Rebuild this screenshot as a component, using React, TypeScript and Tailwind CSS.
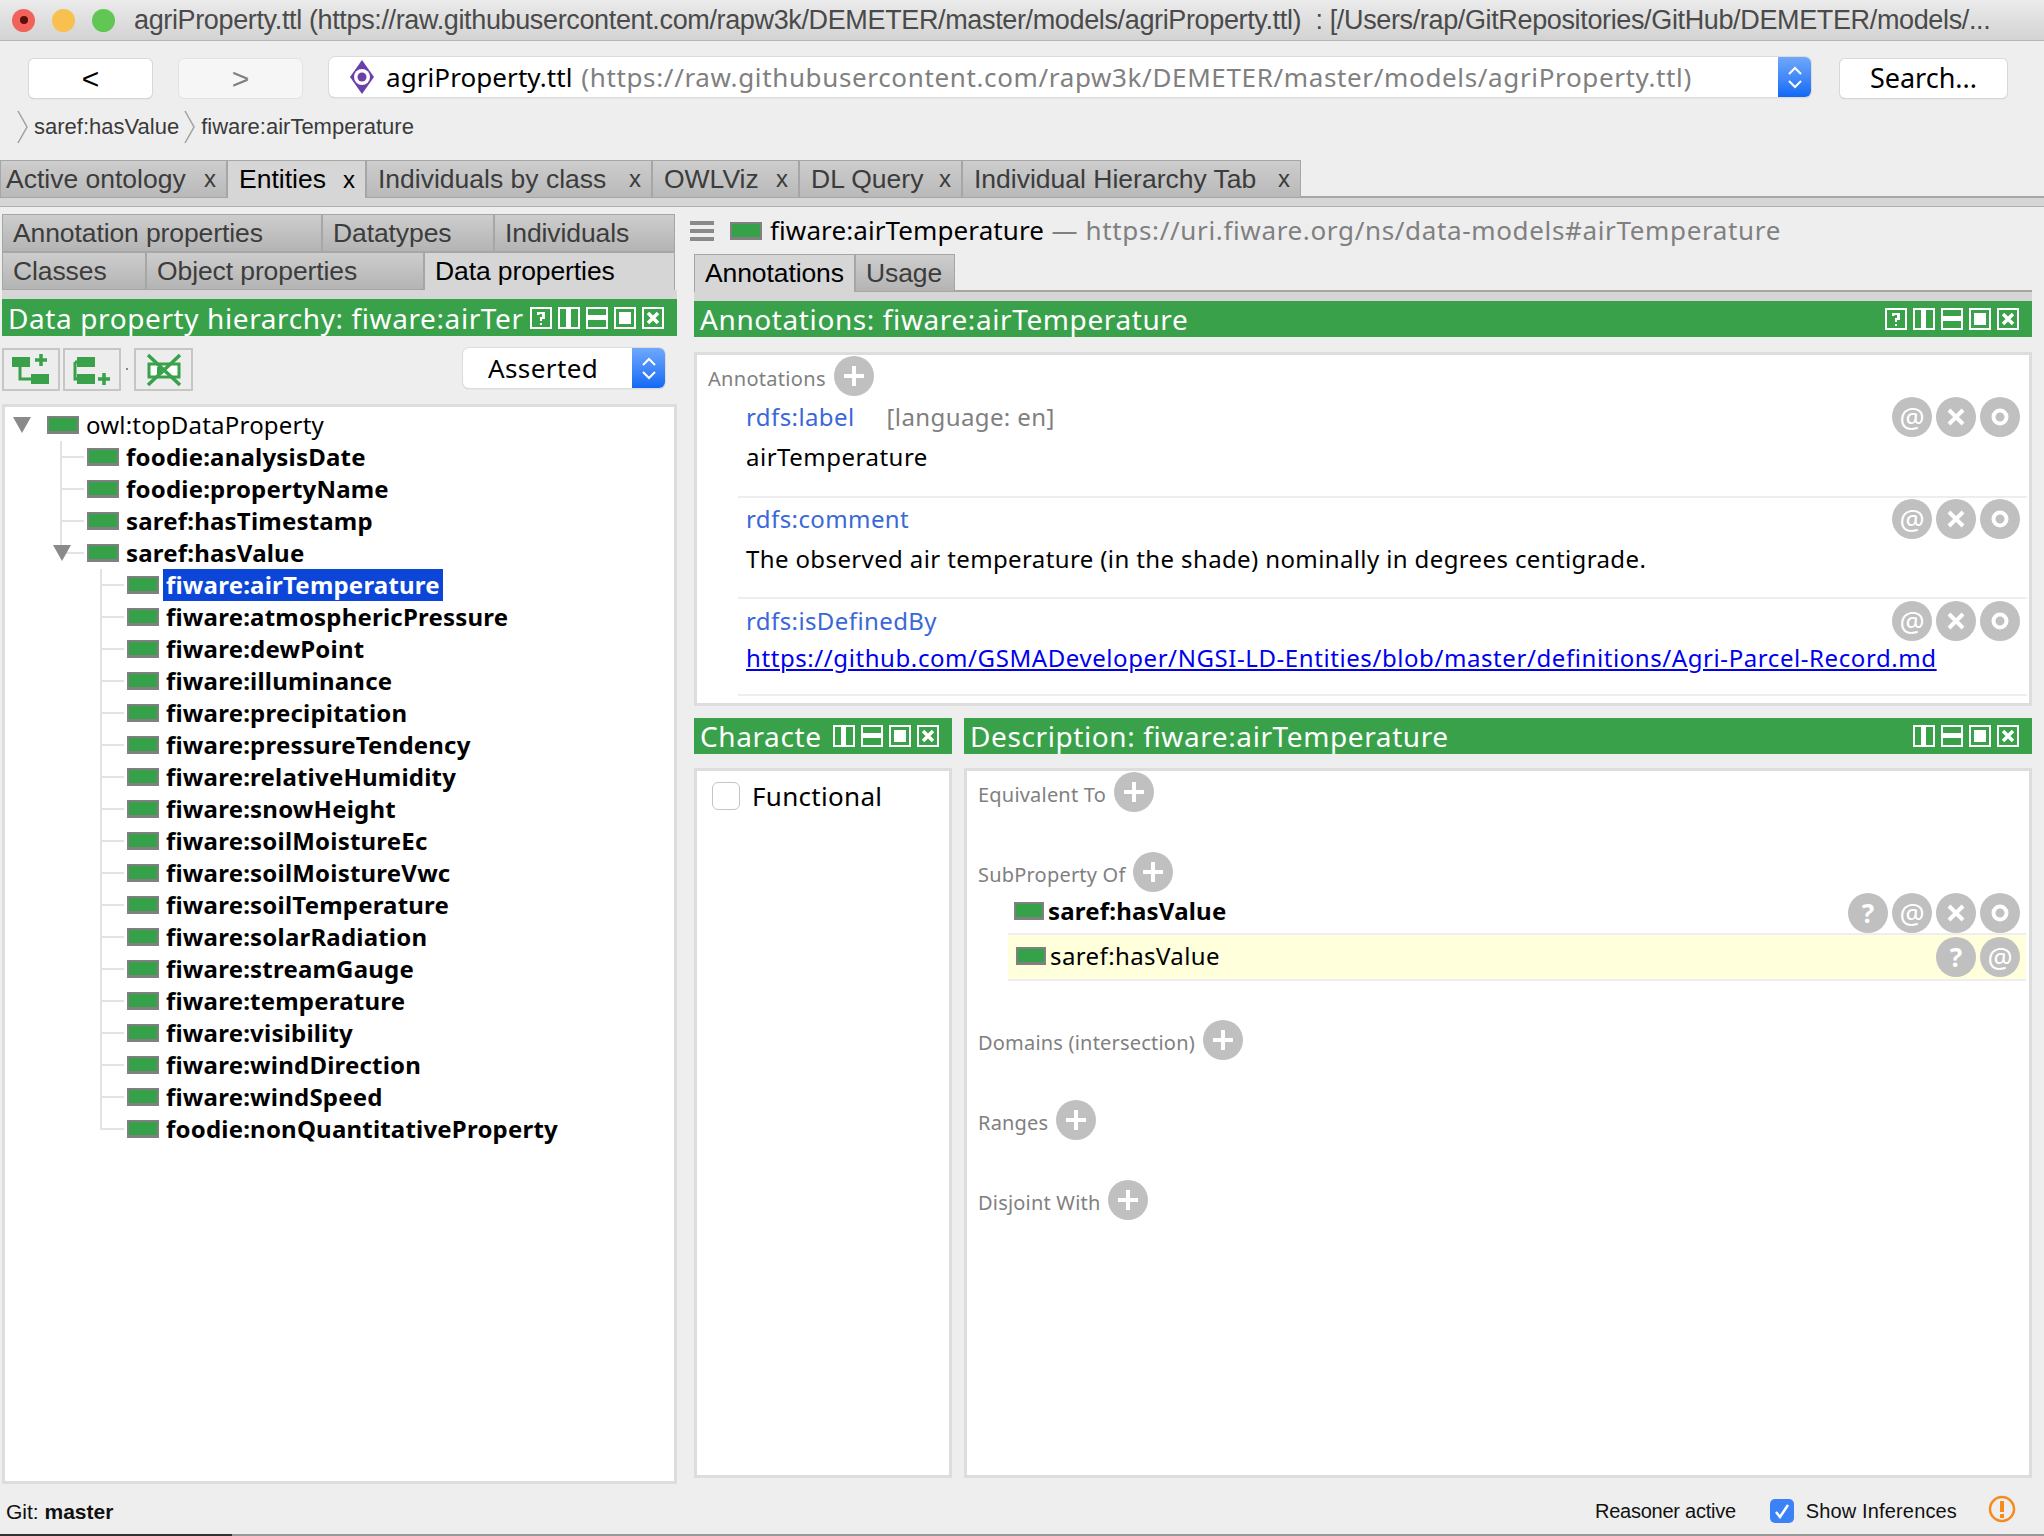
import { ReactNode } from 'react';

const lucida = 'font-["Noto_Sans",sans-serif]';
const helvetica = 'font-["Liberation_Sans",sans-serif]';

const DataIcon = ({ className = 'w-8' }: { className?: string }) => (
  <span className={`block h-[18px] shrink-0 border-2 border-b-[3px] border-[#808080] bg-[#35a24a] ${className}`} />
);

const Triangle = () => (
  <svg width="18" height="16" viewBox="0 0 18 16" className="block">
    <path d="M0 0 H18 L9 16 Z" fill="#8a8a8a" />
  </svg>
);

const Stepper = ({ className }: { className: string }) => (
  <span className={`flex flex-col items-center justify-center gap-[3px] rounded-r-[6px] bg-gradient-to-b from-[#6ea8fb] to-[#0f68f6] ${className}`}>
    <svg width="16" height="10" viewBox="0 0 16 10"><path d="M2 8 L8 2 L14 8" fill="none" stroke="#fff" strokeWidth="2" /></svg>
    <svg width="16" height="10" viewBox="0 0 16 10"><path d="M2 2 L8 8 L14 2" fill="none" stroke="#fff" strokeWidth="2" /></svg>
  </span>
);

type ViewIcon = 'help' | 'vsplit' | 'hsplit' | 'max' | 'close';

const ViewButton = ({ kind }: { kind: ViewIcon }) => (
  <svg width="22" height="22" viewBox="0 0 22 22" className="block shrink-0">
    <rect x="1" y="1" width="20" height="20" fill="none" stroke="#fff" strokeWidth="2" />
    {kind === 'help' && <path d="M7 8 V5 H15 V12 H12 V14 H10 V10 H12 V7 H9.5 V8 Z M10 16 H12 V18 H10 Z" fill="#fff" />}
    {kind === 'vsplit' && <rect x="8" y="1" width="5" height="20" fill="#fff" />}
    {kind === 'hsplit' && <rect x="1" y="8" width="20" height="5" fill="#fff" />}
    {kind === 'max' && <rect x="5" y="5" width="12" height="12" fill="#fff" />}
    {kind === 'close' && <path d="M6 6 L16 16 M16 6 L6 16" stroke="#fff" strokeWidth="3.5" />}
  </svg>
);

const ViewHeader = ({ title, icons, className }: { title: string; icons: ViewIcon[]; className: string }) => (
  <div className={`flex h-9 items-center justify-between bg-[#3aa14b] pl-[6px] pr-[13px] ${className}`}>
    <span className={`${lucida} whitespace-nowrap text-[28px] leading-none tracking-[0.6px] text-white`}>{title}</span>
    <span className="flex gap-[6px]">
      {icons.map((icon) => (
        <ViewButton key={icon} kind={icon} />
      ))}
    </span>
  </div>
);

const Circle = ({ children, className = '' }: { children: ReactNode; className?: string }) => (
  <span className={`flex h-10 w-10 shrink-0 items-center justify-center rounded-full bg-[#c0c0c0] font-bold text-white ${lucida} ${className}`}>
    {children}
  </span>
);

const PlusCircle = ({ className = '' }: { className?: string }) => (
  <Circle className={className}>
    <svg width="24" height="24" viewBox="0 0 24 24"><path d="M12 2 V22 M2 12 H22" stroke="#fff" strokeWidth="4" /></svg>
  </Circle>
);

const AtCircle = () => <Circle className="text-[28px] font-normal leading-none">@</Circle>;
const HelpCircle = () => <Circle className="text-[26px] leading-none">?</Circle>;
const CrossCircle = () => (
  <Circle>
    <svg width="20" height="20" viewBox="0 0 20 20"><path d="M3 3 L17 17 M17 3 L3 17" stroke="#fff" strokeWidth="4" /></svg>
  </Circle>
);
const RingCircle = () => (
  <Circle>
    <svg width="18" height="18" viewBox="0 0 18 18"><circle cx="9" cy="9" r="6.5" fill="none" stroke="#fff" strokeWidth="4" /></svg>
  </Circle>
);

const Tab = ({ label, active, first, width }: { label: string; active?: boolean; first?: boolean; width: string }) => (
  <div
    className={`flex h-[38px] items-center border border-[#a6a6a6] text-[26.5px] leading-none ${helvetica} ${width} ${first ? 'pl-[5px]' : 'pl-[11px]'} ${
      active ? 'border-b-0 bg-[#d6d6d6] text-black' : 'bg-gradient-to-b from-[#cdcdcd] to-[#b9b9b9] text-[#3c3c3c]'
    }`}
  >
    <span className="whitespace-nowrap">{label}</span>
    <span className="ml-auto mr-[10px] text-[24px]">x</span>
  </div>
);

const SubTab = ({ label, active, width }: { label: string; active?: boolean; width: string }) => (
  <div
    className={`flex h-[38px] items-center border border-[#a6a6a6] pl-[10px] text-[26.5px] leading-none tracking-[-0.1px] ${helvetica} ${width} ${
      active ? 'border-b-0 bg-[#d6d6d6] text-black' : 'bg-gradient-to-b from-[#cdcdcd] to-[#b4b4b4] text-[#3c3c3c]'
    }`}
  >
    <span className="whitespace-nowrap">{label}</span>
  </div>
);

const children = [
  'fiware:airTemperature',
  'fiware:atmosphericPressure',
  'fiware:dewPoint',
  'fiware:illuminance',
  'fiware:precipitation',
  'fiware:pressureTendency',
  'fiware:relativeHumidity',
  'fiware:snowHeight',
  'fiware:soilMoistureEc',
  'fiware:soilMoistureVwc',
  'fiware:soilTemperature',
  'fiware:solarRadiation',
  'fiware:streamGauge',
  'fiware:temperature',
  'fiware:visibility',
  'fiware:windDirection',
  'fiware:windSpeed',
  'foodie:nonQuantitativeProperty',
];

const TreeRow = ({
  label,
  depth,
  bold = true,
  open,
  last,
  selected,
}: {
  label: string;
  depth: number;
  bold?: boolean;
  open?: boolean;
  last?: boolean;
  selected?: boolean;
}) => {
  const iconLeft = depth === 0 ? 'ml-[42px]' : depth === 1 ? 'ml-[82px]' : 'ml-[122px]';
  return (
    <div className="relative flex h-8 items-center">
      {depth > 0 && (
        <>
          <span className={`absolute top-0 w-[2px] bg-[#e3e3e3] ${depth === 1 ? 'left-[55px]' : 'left-[95px]'} ${last ? 'h-4' : 'h-8'}`} />
          <span className={`absolute top-[15px] h-[2px] w-6 bg-[#e3e3e3] ${depth === 1 ? 'left-[55px]' : 'left-[95px]'}`} />
        </>
      )}
      {open && (
        <span className={`absolute top-[8px] ${depth === 0 ? 'left-[8px]' : 'left-[48px]'}`}>
          <Triangle />
        </span>
      )}
      <DataIcon className={`relative w-8 ${iconLeft}`} />
      <span
        className={`ml-[4px] whitespace-nowrap px-[3px] text-[24px] leading-8 tracking-[0.2px] ${lucida} ${bold ? 'font-bold' : ''} ${
          selected ? 'bg-[#0b46d8] text-white' : 'text-black'
        }`}
      >
        {label}
      </span>
    </div>
  );
};

const AnnotationItem = ({
  name,
  extra,
  value,
  height,
  rowClass,
  valueClass,
}: {
  name: string;
  extra?: string;
  value: ReactNode;
  height: string;
  rowClass: string;
  valueClass: string;
}) => (
  <div className={`ml-[41px] mr-[2px] border-b-2 border-[#eeeeee] ${height}`}>
    <div className={`flex h-[38px] items-center justify-between pr-[7px] ${rowClass}`}>
      <span className={`pl-2 text-[24px] leading-none tracking-[0.4px] text-[#3a68d8] ${lucida}`}>
        {name}
        {extra && <span className="ml-8 text-[#808080]">{extra}</span>}
      </span>
      <span className="flex gap-1">
        <AtCircle />
        <CrossCircle />
        <RingCircle />
      </span>
    </div>
    <div className={`pl-2 text-[24px] leading-8 ${lucida} ${valueClass}`}>{value}</div>
  </div>
);

const SectionHeader = ({ label, height = 'h-[80px]' }: { label: string; height?: string }) => (
  <div className={`pl-[11px] ${height}`}>
    <div className="flex h-[46px] items-center gap-2">
      <span className={`text-[20px] leading-none tracking-[0.2px] text-[#808080] ${lucida}`}>{label}</span>
      <PlusCircle className="-mt-[6px]" />
    </div>
  </div>
);

export default function App() {
  return (
    <div className={`relative flex h-[1536px] w-[2044px] flex-col overflow-hidden bg-[#eeeeee] ${helvetica}`}>
      {/* title bar */}
      <div className="flex h-[41px] shrink-0 items-center border-b border-[#b5b5b5] bg-gradient-to-b from-[#ebebeb] to-[#d3d3d3] pl-[12px]">
        <span className="flex h-[23px] w-[23px] items-center justify-center rounded-full bg-[#f0625a]">
          <span className="h-2 w-2 rounded-full bg-[#5a0f0a]" />
        </span>
        <span className="ml-[17px] h-[23px] w-[23px] rounded-full bg-[#f8c04e]" />
        <span className="ml-[17px] h-[23px] w-[23px] rounded-full bg-[#62c655]" />
        <span className="ml-[19px] whitespace-nowrap text-[27px] leading-none tracking-[-0.36px] text-[#4a4a4a]">
          agriProperty.ttl (https://raw.githubusercontent.com/rapw3k/DEMETER/master/models/agriProperty.ttl)&nbsp; : [/Users/rap/GitRepositories/GitHub/DEMETER/models/...
        </span>
      </div>

      {/* navigation bar */}
      <div className="flex h-[58px] shrink-0 items-start pl-[29px] pt-[16px]">
        <button className={`mt-[2px] flex h-[39px] w-[123px] items-center justify-center rounded-[5px] bg-white text-[30px] leading-none shadow-[0_0_0_1px_#d8d8d8,0_1px_1px_#aaa] ${helvetica}`}>&lt;</button>
        <button className={`ml-[27px] mt-[2px] flex h-[39px] w-[123px] items-center justify-center rounded-[5px] bg-[#f6f6f6] text-[30px] leading-none text-[#808080] shadow-[0_0_0_1px_#e2e2e2] ${helvetica}`}>&gt;</button>
        <div className="ml-[27px] flex h-[40px] w-[1482px] items-center rounded-[6px] bg-white shadow-[0_0_0_1px_#dcdcdc,0_1px_1px_#aaa]">
          <svg width="28" height="36" viewBox="0 0 28 36" className="ml-[19px] shrink-0">
            <path d="M14 1 L26 18 L14 35 L2 18 Z" fill="#6b3fa8" />
            <circle cx="14" cy="18" r="8" fill="#fff" />
            <circle cx="14" cy="18" r="4.5" fill="#6b3fa8" />
          </svg>
          <span className={`ml-[10px] whitespace-nowrap text-[26px] leading-none tracking-[0.08px] ${lucida}`}>
            agriProperty.ttl <span className="ml-[2px] tracking-[0.64px] text-[#808080]">(https://raw.githubusercontent.com/rapw3k/DEMETER/master/models/agriProperty.ttl)</span>
          </span>
          <Stepper className="ml-auto h-[40px] w-[33px]" />
        </div>
        <button className={`ml-[29px] mt-[2px] flex h-[39px] w-[167px] items-center justify-center rounded-[5px] bg-white pb-[3px] text-[27px] leading-none shadow-[0_0_0_1px_#d8d8d8,0_1px_1px_#aaa] ${lucida}`}>Search...</button>
      </div>

      {/* breadcrumb */}
      <div className="flex h-[61px] shrink-0 items-start pl-[17px] pt-[11px] text-[22px] leading-[34px] text-[#3a3a3a]">
        <svg width="12" height="34" viewBox="0 0 12 34" className="mr-[5px]"><path d="M1 1 L10 17 L1 33" fill="none" stroke="#a0a0a0" strokeWidth="1.5" /></svg>
        <span>saref:hasValue</span>
        <svg width="12" height="34" viewBox="0 0 12 34" className="mx-[5px]"><path d="M1 1 L10 17 L1 33" fill="none" stroke="#a0a0a0" strokeWidth="1.5" /></svg>
        <span>fiware:airTemperature</span>
      </div>

      {/* workspace tabs */}
      <div className="flex h-[38px] shrink-0 border-b-2 border-[#a6a6a6]">
        <Tab label="Active ontology" first width="w-[227px]" />
        <Tab label="Entities" active width="w-[139px]" />
        <Tab label="Individuals by class" width="w-[286px]" />
        <Tab label="OWLViz" width="w-[147px]" />
        <Tab label="DL Query" width="w-[163px]" />
        <Tab label="Individual Hierarchy Tab" width="w-[339px]" />
      </div>
      <div className="h-[9px] shrink-0 border-b border-[#b0b0b0] bg-[#d6d6d6]" />

      {/* main split */}
      <div className="flex h-[1277px] shrink-0 gap-[17px] pl-[2px]">
        {/* left column */}
        <div className="flex w-[675px] flex-col pt-[7px]">
          <div className="flex">
            <SubTab label="Annotation properties" width="w-[320px]" />
            <SubTab label="Datatypes" width="w-[172px]" />
            <SubTab label="Individuals" width="w-[181px]" />
          </div>
          <div className="flex">
            <SubTab label="Classes" width="w-[144px]" />
            <SubTab label="Object properties" width="w-[278px]" />
            <SubTab label="Data properties" active width="w-[251px]" />
          </div>
          <div className="h-[9px] bg-[#d6d6d6]" />
          <ViewHeader title="Data property hierarchy: fiware:airTer" icons={['help', 'vsplit', 'hsplit', 'max', 'close']} className="h-[37px]" />
          <div className="flex h-[68px] items-start pt-[12px]">
            <div className="flex h-[43px] w-[58px] items-center justify-center border-2 border-[#c6c6c6] bg-[#ededed]">
              <svg width="40" height="32" viewBox="0 0 40 32">
                <rect x="1" y="3" width="18" height="10" fill="#3aa14b" />
                <rect x="20" y="20" width="18" height="10" fill="#3aa14b" />
                <path d="M9 13 V25 H20" fill="none" stroke="#3aa14b" strokeWidth="3" />
                <path d="M30 0 V12 M24 6 H36" stroke="#3aa14b" strokeWidth="3.5" />
              </svg>
            </div>
            <div className="ml-[3px] flex h-[43px] w-[58px] items-center justify-center border-2 border-[#c6c6c6] bg-[#ededed]">
              <svg width="40" height="32" viewBox="0 0 40 32">
                <rect x="5" y="3" width="18" height="10" fill="#3aa14b" />
                <rect x="5" y="20" width="18" height="10" fill="#3aa14b" />
                <path d="M3 8 H5 M3 8 V25 H5" fill="none" stroke="#3aa14b" strokeWidth="3" />
                <path d="M32 19 V31 M26 25 H38" stroke="#3aa14b" strokeWidth="3.5" />
              </svg>
            </div>
            <span className="ml-[5px] mt-[20px] h-[2px] w-[2px] bg-[#888]" />
            <div className="ml-[6px] flex h-[43px] w-[59px] items-center justify-center border-2 border-[#c6c6c6] bg-[#ededed]">
              <svg width="36" height="34" viewBox="0 0 36 34">
                <rect x="3" y="11" width="30" height="13" fill="#fff" stroke="#3aa14b" strokeWidth="3" />
                <rect x="11" y="14" width="6" height="7" fill="#3aa14b" />
                <path d="M2 2 L34 32 M34 2 L2 32" stroke="#3aa14b" strokeWidth="3.5" />
              </svg>
            </div>
            <div className="ml-auto mr-[12px] flex h-[40px] w-[202px] items-center rounded-[6px] bg-white shadow-[0_0_0_1px_#dcdcdc,0_1px_1px_#aaa]">
              <span className={`ml-[25px] text-[26px] leading-none tracking-[0.4px] ${lucida}`}>Asserted</span>
              <Stepper className="ml-auto h-[40px] w-[33px]" />
            </div>
          </div>
          <div className="h-[1080px] border-[3px] border-[#dddddd] bg-white pt-[2px]">
            <TreeRow label="owl:topDataProperty" depth={0} bold={false} open />
            <TreeRow label="foodie:analysisDate" depth={1} />
            <TreeRow label="foodie:propertyName" depth={1} />
            <TreeRow label="saref:hasTimestamp" depth={1} />
            <TreeRow label="saref:hasValue" depth={1} open last />
            {children.map((name, index) => (
              <TreeRow key={name} label={name} depth={2} selected={index === 0} last={index === children.length - 1} />
            ))}
          </div>
        </div>

        {/* right column */}
        <div className="flex w-[1338px] flex-col">
          <div className="flex h-[47px] items-center">
            <span className="-ml-[4px] flex w-6 flex-col gap-[4px]">
              <span className="h-1 bg-[#8a8a8a]" />
              <span className="h-1 bg-[#8a8a8a]" />
              <span className="h-1 bg-[#8a8a8a]" />
            </span>
            <DataIcon className="ml-4 w-8" />
            <span className={`ml-[8px] -mt-[2px] whitespace-nowrap text-[26px] leading-none tracking-[0.1px] ${lucida}`}>
              fiware:airTemperature
              <span className="tracking-[0.65px] text-[#808080]"> — https://uri.fiware.org/ns/data-models#airTemperature</span>
            </span>
          </div>
          <div className="flex h-[38px] border-b-2 border-[#a6a6a6]">
            <SubTab label="Annotations" active width="w-[161px]" />
            <SubTab label="Usage" width="w-[100px]" />
          </div>
          <div className="h-[9px] bg-[#d6d6d6]" />
          <ViewHeader title="Annotations: fiware:airTemperature" icons={['help', 'vsplit', 'hsplit', 'max', 'close']} className="h-9" />

          <div className="mt-[15px] h-[354px] border-[3px] border-[#dddddd] bg-white">
            <div className="flex h-[43px] items-center gap-2 pl-[11px]">
              <span className={`mt-[4px] text-[20px] leading-none tracking-[0.3px] text-[#808080] ${lucida}`}>Annotations</span>
              <PlusCircle className="-mt-[2px]" />
            </div>
            <AnnotationItem name="rdfs:label" extra="[language: en]" value="airTemperature" height="h-[100px]" rowClass="" valueClass="pt-[5px] tracking-[0.5px]" />
            <AnnotationItem
              name="rdfs:comment"
              value="The observed air temperature (in the shade) nominally in degrees centigrade."
              height="h-[99px]"
              rowClass="mt-[2px]"
              valueClass="pt-[5px] tracking-[0.38px]"
            />
            <AnnotationItem
              name="rdfs:isDefinedBy"
              value={
                <span className="text-[#0000ee] underline">
                  https://github.com/GSMADeveloper/NGSI-LD-Entities/blob/master/definitions/Agri-Parcel-Record.md
                </span>
              }
              height="h-[94px]"
              rowClass="mt-[3px]"
              valueClass="pt-[2px] tracking-[0.58px]"
            />
          </div>

          <div className="mt-3 flex gap-[12px]">
            <div className="flex w-[258px] flex-col">
              <ViewHeader title="Characte" icons={['vsplit', 'hsplit', 'max', 'close']} className="h-9" />
              <div className="mt-[14px] flex h-[710px] items-start border-[3px] border-[#dddddd] bg-white pl-[15px] pt-[11px]">
                <span className="h-7 w-7 rounded-[6px] border border-[#c4c4c4] bg-white" />
                <span className={`ml-3 text-[26px] leading-7 tracking-[0.3px] ${lucida}`}>Functional</span>
              </div>
            </div>
            <div className="flex w-[1068px] flex-col">
              <ViewHeader title="Description: fiware:airTemperature" icons={['vsplit', 'hsplit', 'max', 'close']} className="h-9" />
              <div className="mt-[14px] h-[710px] border-[3px] border-[#dddddd] bg-white pt-px">
                <SectionHeader label="Equivalent To" />
                <SectionHeader label="SubProperty Of" height="h-auto" />
                <div className="mb-[5px] flex h-[30px] items-center pl-[47px] pr-[9px]">
                  <DataIcon className="-mt-[4px] w-[30px]" />
                  <span className={`-mt-[4px] ml-[4px] text-[24px] font-bold leading-none tracking-[0.2px] ${lucida}`}>saref:hasValue</span>
                  <span className="ml-auto flex gap-1">
                    <HelpCircle />
                    <AtCircle />
                    <CrossCircle />
                    <RingCircle />
                  </span>
                </div>
                <div className="ml-[41px] mr-[3px] flex h-[48px] items-center border-y-2 border-[#eeeeee] bg-[#ffffdc] pl-2 pr-[6px]">
                  <DataIcon className="-mt-[2px] w-[30px]" />
                  <span className={`-mt-[2px] ml-[4px] text-[24px] leading-none tracking-[0.4px] ${lucida}`}>saref:hasValue</span>
                  <span className="ml-auto flex gap-1">
                    <HelpCircle />
                    <AtCircle />
                  </span>
                </div>
                <div className="h-[39px]" />
                <SectionHeader label="Domains (intersection)" />
                <SectionHeader label="Ranges" />
                <SectionHeader label="Disjoint With" />
              </div>
            </div>
          </div>
        </div>
      </div>

      {/* status bar */}
      <div className="flex h-[50px] shrink-0 items-center pl-[6px] pr-[28px] pt-[4px] text-[20px] leading-none text-[#111]">
        <span className="text-[21px]">
          Git: <b>master</b>
        </span>
        <span className="ml-auto tracking-[-0.25px]">Reasoner active</span>
        <span className="ml-[34px] flex h-6 w-6 items-center justify-center rounded-[5px] bg-[#3b82f6]">
          <svg width="16" height="16" viewBox="0 0 16 16"><path d="M2 9 L6 14 L14 2" fill="none" stroke="#fff" strokeWidth="2.5" /></svg>
        </span>
        <span className="ml-[12px] tracking-[0.15px]">Show Inferences</span>
        <svg width="28" height="28" viewBox="0 0 28 28" className="ml-[31px] -mt-1">
          <circle cx="14" cy="14" r="12" fill="none" stroke="#f58a1f" strokeWidth="2.5" />
          <path d="M12 6 H16 V17 H12 Z M12 19 H16 V23 H12 Z" fill="#f58a1f" />
        </svg>
      </div>
      <div className="flex h-[3px] shrink-0">
        <span className="h-full w-[232px] bg-[#333]" />
        <span className="h-full flex-1 bg-[#999]" />
      </div>
    </div>
  );
}
